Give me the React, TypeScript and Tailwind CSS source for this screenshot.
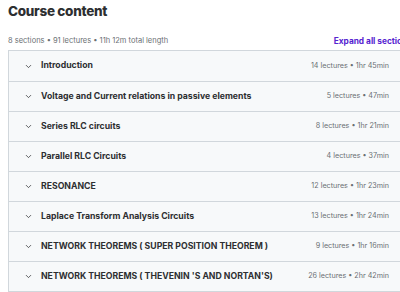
import { ChevronDown } from "lucide-react";

const sections = [
  { title: "Introduction", meta: "14 lectures • 1hr 45min" },
  { title: "Voltage and Current relations in passive elements", meta: "5 lectures • 47min" },
  { title: "Series RLC circuits", meta: "8 lectures • 1hr 21min" },
  { title: "Parallel RLC Circuits", meta: "4 lectures • 37min" },
  { title: "RESONANCE", meta: "12 lectures • 1hr 23min" },
  { title: "Laplace Transform Analysis Circuits", meta: "13 lectures • 1hr 24min" },
  { title: "NETWORK THEOREMS ( SUPER POSITION THEOREM )", meta: "9 lectures • 1hr 16min" },
  { title: "NETWORK THEOREMS ( THEVENIN 'S AND NORTAN'S)", meta: "26 lectures • 2hr 42min" },
];

export default function App() {
  return (
    <div className="w-[400px] h-[292px] overflow-hidden bg-white font-['Inter',sans-serif] text-[#2d2f31]">
      <div className="w-[412px] pl-2">
        <h2 className="pt-[1px] text-[13.5px] font-extrabold leading-[20px] tracking-[-0.3px]">Course content</h2>

        {/* summary line */}
        <div className="mt-[15px] flex items-center justify-between text-[7.5px] leading-[10px]">
          <span className="text-[#6a6f73]">8 sections • 91 lectures • 11h 12m total length</span>
          <span className="text-[8.3px] font-bold text-[#5624d0]">Expand all sections</span>
        </div>

        {/* section list */}
        <div className="mt-[4px] border border-[#d1d7dc]">
          {sections.map((s, i) => (
            <div
              key={s.title}
              className={`flex h-[30px] items-center bg-[#f7f9fa] pl-[15px] pr-[22px] ${i > 0 ? "border-t border-[#d1d7dc]" : ""}`}
            >
              <ChevronDown size={9} strokeWidth={2} className="text-[#2d2f31]" />
              <span className="ml-[8px] flex-1 text-[8.7px] font-bold">{s.title}</span>
              <span className="text-[7.2px] text-[#6a6f73]">{s.meta}</span>
            </div>
          ))}
        </div>
      </div>
    </div>
  );
}
